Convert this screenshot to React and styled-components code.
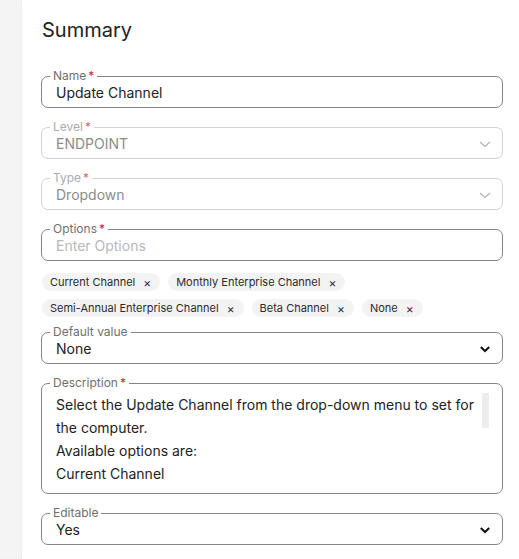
import React from "react";
import styled, { createGlobalStyle } from "styled-components";

const Global = createGlobalStyle`
  html, body { margin: 0; padding: 0; background: #fff; }
  body { font-family: Inter, "Noto Sans", sans-serif; color: #222; }
  * { box-sizing: border-box; }
`;

const Page = styled.div`
  display: flex;
  min-height: 559px;
`;

const Sidebar = styled.div`
  width: 22px;
  flex: none;
  background: #f4f4f4;
  box-shadow: inset -1px 0 2px rgba(0,0,0,0.03);
`;

const Main = styled.main`
  flex: 1;
  padding: 18px 16px 0 19px;
  display: flex;
  flex-direction: column;
`;

const Title = styled.h2`
  margin: 0 0 27px 1px;
  font-size: 20px;
  line-height: 24px;
  font-weight: 400;
  color: #222;
`;

const Fields = styled.div`
  display: flex;
  flex-direction: column;
  gap: 12px;
`;

const Fieldset = styled.fieldset`
  margin: 0;
  min-width: 0;
  border: 1px solid ${(p) => (p.$disabled ? "#d2d2d2" : "#858585")};
  border-radius: 7px;
  padding: 0 10px 0 8px;
  position: relative;
`;

const Legend = styled.legend`
  padding: 0 3px;
  font-size: 12px;
  line-height: 14px;
  color: ${(p) => (p.$disabled ? "#ababab" : "#6f6f6f")};
`;

const Req = styled.span`
  color: #c1272d;
  margin-left: 2px;
  opacity: ${(p) => (p.$disabled ? 0.7 : 1)};
`;

const Control = styled.div`
  display: flex;
  align-items: center;
  height: 24px;
  padding: 0 0 4px 6px;
  font-size: 14px;
  line-height: 20px;
  color: ${(p) => (p.$tone === "disabled" ? "#8c8c8c" : p.$tone === "placeholder" ? "#b8b8b8" : "#222")};
`;

const Value = styled.span`
  flex: 1;
  white-space: nowrap;
`;

const Chevron = styled.svg`
  flex: none;
  margin-right: ${(p) => (p.$light ? "0px" : "1px")};
`;

const Chips = styled.div`
  display: flex;
  flex-wrap: wrap;
  gap: 8px 8px;
  margin: 0 0 -4px 1px;
`;

const Chip = styled.span`
  display: inline-flex;
  align-items: center;
  height: 18px;
  padding: 0 9px 0 8px;
  border-radius: 9px;
  background: #f3f3f3;
  font-size: 11px;
  color: #2b2b2b;
`;

const ChipX = styled.span`
  margin-left: 8px;
  font-size: 12px;
  color: #333;
`;

const TextBox = styled.div`
  height: 103px;
  padding: 3px 14px 0 6px;
  font-size: 14px;
  line-height: 23px;
  color: #222;
`;

const Thumb = styled.div`
  position: absolute;
  right: 13px;
  top: 3px;
  width: 7px;
  height: 35px;
  background: #ececec;
`;

function DownArrow({ light }) {
  return light ? (
    <Chevron $light width="14" height="10" viewBox="0 0 14 10">
      <path d="M2 3 L7 7.5 L12 3" fill="none" stroke="#b4b4b4" strokeWidth="1.3" />
    </Chevron>
  ) : (
    <Chevron width="12" height="10" viewBox="0 0 12 10">
      <path d="M1.8 3 L6 7 L10.2 3" fill="none" stroke="#111" strokeWidth="2" />
    </Chevron>
  );
}

function Field({ label, required, disabled, value, tone, arrow }) {
  return (
    <Fieldset $disabled={disabled}>
      <Legend $disabled={disabled}>
        {label}
        {required && <Req $disabled={disabled}>*</Req>}
      </Legend>
      <Control $tone={tone}>
        <Value>{value}</Value>
        {arrow && <DownArrow light={arrow === "light"} />}
      </Control>
    </Fieldset>
  );
}

const chips = [
  "Current Channel",
  "Monthly Enterprise Channel",
  "Semi-Annual Enterprise Channel",
  "Beta Channel",
  "None",
];

export default function App() {
  return (
    <>
      <Global />
      <Page>
        <Sidebar />
        <Main>
          <Title>Summary</Title>
          <Fields>
            <Field label="Name" required value="Update Channel" />
            <Field label="Level" required disabled tone="disabled" value="ENDPOINT" arrow="light" />
            <Field label="Type" required disabled tone="disabled" value="Dropdown" arrow="light" />
            <Field label="Options" required tone="placeholder" value="Enter Options" />
            <Chips>
              {chips.map((c) => (
                <Chip key={c}>
                  {c}
                  <ChipX>×</ChipX>
                </Chip>
              ))}
            </Chips>
            <Field label="Default value" value="None" arrow="dark" />
            <Fieldset>
              <Legend>
                Description<Req>*</Req>
              </Legend>
              <TextBox>
                Select the Update Channel from the drop-down menu to set for the computer.
                <br />
                Available options are:
                <br />
                Current Channel
              </TextBox>
              <Thumb />
            </Fieldset>
            <Field label="Editable" value="Yes" arrow="dark" />
          </Fields>
        </Main>
      </Page>
    </>
  );
}
